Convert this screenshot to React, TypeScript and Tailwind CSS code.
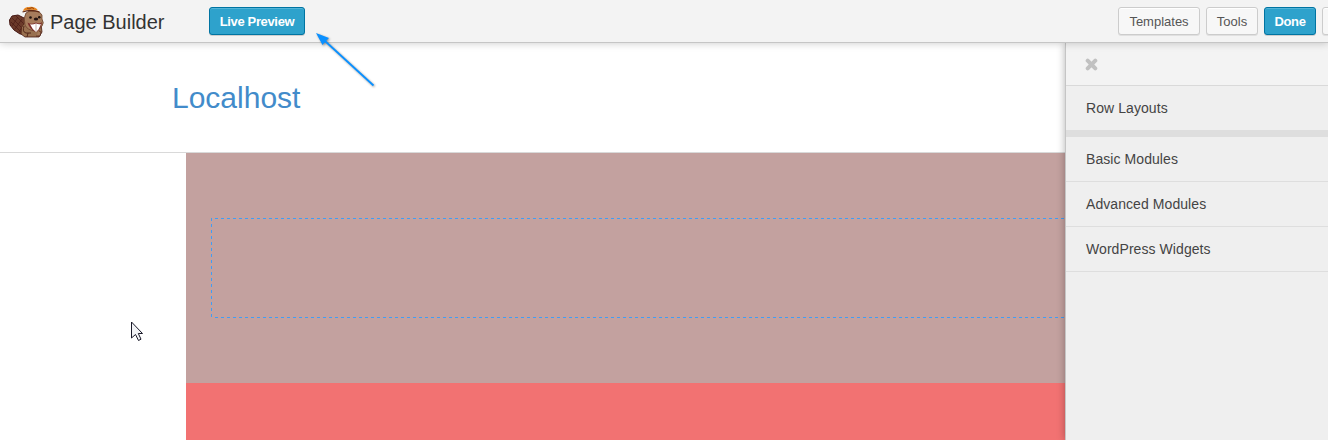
import type { ReactNode } from "react";

function Beaver() {
  return (
    <svg width="36" height="32" viewBox="0 0 36 32" className="shrink-0">
      <path d="M1.5 14 L4 10 L10 9 L18 13 L18 28 L12 28 L6 24 L2 19Z" fill="#6b3a2a" stroke="#451713" />
      <path d="M4 12l12 12M8 10l9 9M3 16l10 10M10 11L4 20M14 13L7 23M17 17L11 26" stroke="#4b1b15" strokeWidth=".7" />
      <path d="M17 16 Q12 21 13 28 L17 31 L31 31 L34 26 L33 18Z" fill="#98704f" stroke="#48190f" strokeWidth=".8" />
      <path d="M18 7 Q21 4 27 5 Q32 5 34 9 L34 13 Q36.5 17 34 20 Q32 24 27 25 Q19 24 17 19 Q15 12 18 7Z" fill="#a67c5c" stroke="#6b412c" strokeWidth=".8" />
      <path d="M15 5 Q16 1 21 1 Q27 0 30 4.5 Q22 3 15 5Z" fill="#e8841c" />
      <path d="M19 2l2 1 3-1.5 2 1.5" stroke="#7d3511" strokeWidth=".8" fill="none" />
      <path d="M14.5 6 Q23 3 31.5 6" stroke="#602813" strokeWidth="1.3" fill="none" />
      <circle cx="22.5" cy="11.5" r="1.3" fill="#21130f" />
      <circle cx="31.3" cy="11.2" r="1.3" fill="#21130f" />
      <ellipse cx="28" cy="13" rx="2.2" ry="1.5" fill="#251512" />
      <path d="M19.5 16.5 Q23 19 28 16.5 Q32 18.5 34 16 Q33 22 30 25 L27.5 26 Q21 22.5 19.5 16.5Z" fill="#7b2b28" />
      <path d="M22 18.3 Q25 18.7 28 17.5 Q31 18.7 33 17.9 L30.5 23.5 L28 26 Q24 23 22 18.3Z" fill="#fff" />
      <path d="M28 18v7.5" stroke="#9d827b" strokeWidth=".6" />
      <path d="M16 20 Q14 26 18 27 L23 27 M20 27 L19 31" stroke="#4b2015" strokeWidth=".9" fill="none" />
      <path d="M31 25 Q34 25 32 30 L28 30" fill="#a67c5c" stroke="#48190f" strokeWidth=".7" />
    </svg>
  );
}

function Button({ children, primary = false }: { children?: ReactNode; primary?: boolean }) {
  const tone = primary
    ? "border-[#0074a2] bg-[#2ea2cc] font-bold text-white tracking-[-0.35px] shadow-[inset_0_1px_0_rgba(120,200,230,0.5),0_1px_0_rgba(0,0,0,0.15)]"
    : "border-[#cccccc] bg-[#f7f7f7] text-[#555555] shadow-[inset_0_1px_0_#fff,0_1px_0_rgba(0,0,0,0.08)]";
  return (
    <button className={`h-7 w-full whitespace-nowrap rounded-[3px] border pt-[2px] text-[13px] leading-[24px] ${tone}`}>
      {children}
    </button>
  );
}

function PanelRow({ children }: { children: ReactNode }) {
  return <div className="h-[45px] border-b border-[#dedede] pl-5 text-[14px] leading-[44px] tracking-[0.07px] text-[#444]">{children}</div>;
}

export default function App() {
  return (
    <div className="flex h-[440px] w-[1328px] flex-col overflow-hidden bg-white font-['Liberation_Sans',Arial,sans-serif]">
      <header className="relative z-20 flex h-[43px] shrink-0 items-start border-b border-[#c5c5c5] bg-[#f3f3f3] pt-[7px] shadow-[0_0_8px_rgba(0,0,0,0.22)]">
        <div className="-mt-[1px] ml-2 flex w-[201px] shrink-0 items-start">
          <Beaver />
          <span className="ml-[6px] mt-[1px] whitespace-nowrap text-[20px] leading-[30px] text-[#333]">Page Builder</span>
        </div>
        <div className="w-[96px] shrink-0">
          <Button primary>Live Preview</Button>
        </div>
        <div className="ml-[813px] flex shrink-0 gap-[6px]">
          <div className="w-[82px] shrink-0"><Button>Templates</Button></div>
          <div className="w-[52px] shrink-0"><Button>Tools</Button></div>
          <div className="w-[52px] shrink-0"><Button primary>Done</Button></div>
          <div className="w-[28px] shrink-0"><Button /></div>
        </div>
      </header>
      <div className="flex min-h-0 flex-1">
        <main className="flex w-[1065px] shrink-0 flex-col">
          <div className="h-[110px] shrink-0 border-b border-[#d9d9d9] pl-[172px] pt-[34px] text-[30px] leading-[42px] text-[#428bca]">
            Localhost
          </div>
          <div className="ml-[186px] flex-1 bg-[#f27272]">
            <div className="h-[230px] bg-[#c3a19f] pl-[25px] pt-[65px]">
              <svg width="854" height="100" className="block" fill="none" stroke="#409df5" strokeDasharray="3 3">
                <path d="M4 .5H854M4 99.5H854" />
                <path d="M.5 0V100" />
              </svg>
            </div>
          </div>
        </main>
        <aside className="relative z-10 flex-1 border-l border-[#c5c5c5] bg-[#efefef] shadow-[0_0_8px_rgba(0,0,0,0.3)]">
          <div className="h-[43px] border-b border-[#d9d9d9] bg-[#f3f3f3] pl-[19px] pt-[15px]">
            <svg width="13" height="13" viewBox="0 0 13 13" className="block">
              <path d="M2.7 2.7l7.6 7.6M10.3 2.7l-7.6 7.6" stroke="#c1c1c1" strokeWidth="4" strokeLinecap="round" />
            </svg>
          </div>
          <div className="h-[51px] border-b-[7px] border-[#dedede] pl-5 text-[14px] leading-[44px] tracking-[0.07px] text-[#444]">Row Layouts</div>
          <PanelRow>Basic Modules</PanelRow>
          <PanelRow>Advanced Modules</PanelRow>
          <PanelRow>WordPress Widgets</PanelRow>
        </aside>
      </div>
      <svg width="66" height="62" viewBox="0 0 66 62" className="pointer-events-none absolute left-[313px] top-[30px] z-30 drop-shadow-[1px_1px_1px_rgba(0,0,0,0.4)]">
        <path d="M12 11L60.5 55.5" stroke="#0a90ff" strokeWidth="1.8" />
        <path d="M3 3L16 8L13 11L9.5 15Z" fill="#0a90ff" />
      </svg>
      <svg width="14" height="21" viewBox="0 0 14 21" className="pointer-events-none absolute left-[131px] top-[321px] z-30">
        <path d="M.5 1v16l4-3.5 3 6 2.5-1.3-2.7-5.7h4.2Z" fill="#f2f3f6" stroke="#191929" />
      </svg>
    </div>
  );
}
